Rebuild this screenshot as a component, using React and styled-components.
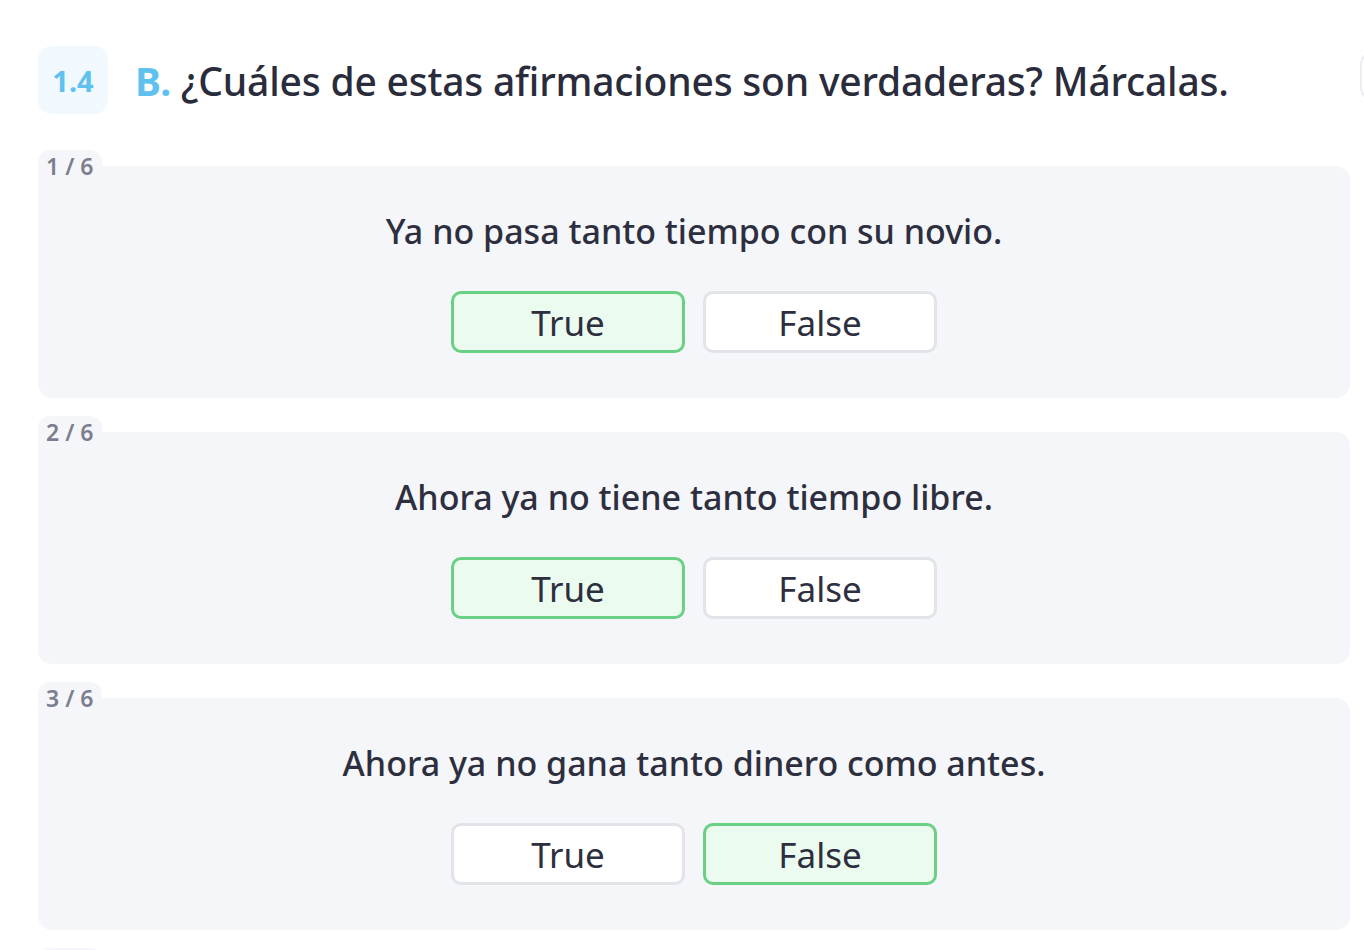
import React from 'react'
import styled, { createGlobalStyle } from 'styled-components';

const GlobalStyle = createGlobalStyle`
  html, body {
    margin: 0;
    padding: 0;
    background: #ffffff;
    overflow: hidden;
  }
  body {
    font-family: "Noto Sans", "Open Sans", sans-serif;
    color: #2d2f3e;
  }
`;

const Page = styled.div`
  width: 1364px;
  height: 950px;
  box-sizing: border-box;
  padding: 46px 14px 0 38px;
  display: flex;
  flex-direction: column;
  gap: 18px;
`;

const Header = styled.div`
  display: flex;
  align-items: center;
  gap: 27px;
  position: relative;
  margin-bottom: 18px;
`;

const Badge = styled.div`
  width: 70px;
  height: 68px;
  border-radius: 14px;
  background: #f1f9fe;
  display: flex;
  align-items: center;
  justify-content: center;
  color: #5fc1f0;
  font-size: 29px;
  font-weight: 700;
`;

const Title = styled.h1`
  margin: 0;
  font-size: 39px;
  font-weight: 500;
  color: #2a2c3b;
  letter-spacing: -0.2px;

  span {
    color: #5fc1f0;
    font-weight: 700;
  }
`;

const EdgeButton = styled.div`
  position: absolute;
  left: 1322px;
  top: 6px;
  width: 60px;
  height: 44px;
  border: 2px solid #eeeef2;
  border-radius: 12px;
`;

const Item = styled.div`
  display: flex;
  flex-direction: column;
  align-items: flex-start;
`;

const Tab = styled.div`
  position: relative;
  z-index: 1;
  height: 32px;
  line-height: 32px;
  padding: 0 9px 0 8px;
  border-radius: 12px;
  background: #f5f6fa;
  color: #7b7e8e;
  font-size: 23px;
  font-weight: 600;
`;

const Card = styled.div`
  align-self: stretch;
  margin-top: -16px;
  background: #f5f6fa;
  border-radius: 14px;
  padding: 45px 0 45px;
  display: flex;
  flex-direction: column;
  align-items: center;
  gap: 40px;
`;

const Question = styled.div`
  font-size: 34px;
  font-weight: 500;
  line-height: 40px;
  color: #2d2f3e;
`;

const Options = styled.div`
  display: flex;
  gap: 18px;
`;

const Option = styled.button`
  width: 234px;
  height: 62px;
  box-sizing: border-box;
  border-radius: 10px;
  border: 3px solid ${p => (p.selected ? '#6ad084' : '#e3e3ea')};
  background: ${p => (p.selected ? '#ebfbf0' : '#ffffff')};
  color: #2d2f3e;
  font-family: inherit;
  font-size: 35px;
  font-weight: 400;
  cursor: pointer;
  padding: 0;
`;

const items = [
  { text: 'Ya no pasa tanto tiempo con su novio.', answer: true },
  { text: 'Ahora ya no tiene tanto tiempo libre.', answer: true },
  { text: 'Ahora ya no gana tanto dinero como antes.', answer: false },
  { text: '', answer: null },
];

const App = () => {
  return (
    <>
      <GlobalStyle />
      <Page>
        <Header>
          <Badge>1.4</Badge>
          <Title><span>B.</span> ¿Cuáles de estas afirmaciones son verdaderas? Márcalas.</Title>
          <EdgeButton />
        </Header>
        {items.map((item, i) => (
          <Item key={i}>
            <Tab>{i + 1} / 6</Tab>
            <Card>
              <Question>{item.text || '\u00a0'}</Question>
              <Options>
                <Option selected={item.answer === true}>True</Option>
                <Option selected={item.answer === false}>False</Option>
              </Options>
            </Card>
          </Item>
        ))}
      </Page>
    </>
  )
}

export default App
